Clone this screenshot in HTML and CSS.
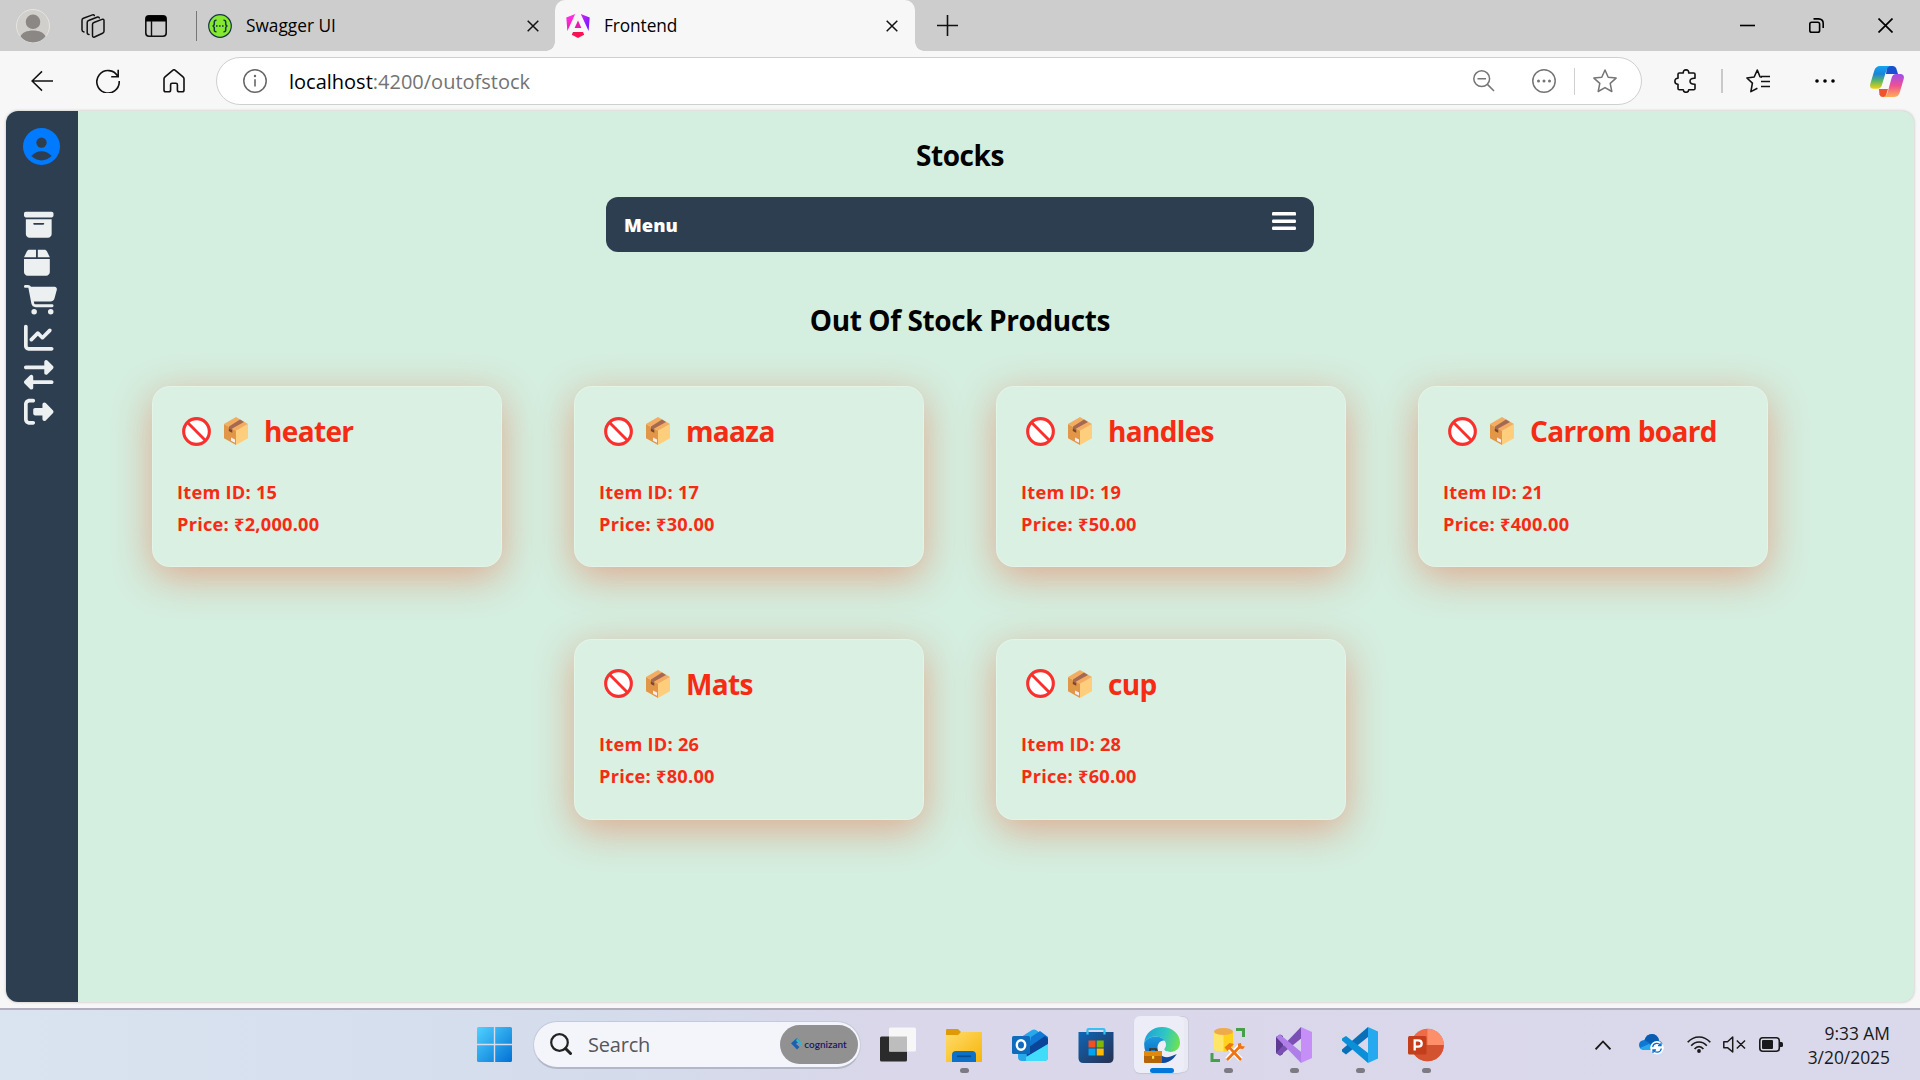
FILE: index.html
```html
<!DOCTYPE html>
<html lang="en">
<head>
<meta charset="utf-8">
<title>Frontend</title>
<link rel="stylesheet" href="styles.css">
</head>
<body>
<svg class="defs" width="0" height="0" aria-hidden="true">
  <defs>
    <linearGradient id="angL" x1="0" y1="0" x2="0" y2="1"><stop offset="0" stop-color="#ff32e8"/><stop offset="1" stop-color="#f01ab0"/></linearGradient>
    <linearGradient id="angR" x1="0" y1="0" x2="1" y2="1"><stop offset="0" stop-color="#c72bf0"/><stop offset="1" stop-color="#7010ff"/></linearGradient>
    <linearGradient id="winG" gradientUnits="userSpaceOnUse" x1="0" y1="0" x2="35" y2="35"><stop offset="0" stop-color="#4fd2ff"/><stop offset="1" stop-color="#0271d4"/></linearGradient>
    <linearGradient id="foldG" x1="0" y1="0" x2="1" y2="1"><stop offset="0" stop-color="#ffdc6b"/><stop offset="1" stop-color="#f7b409"/></linearGradient>
    <linearGradient id="storeG" x1="0" y1="0" x2="1" y2="1"><stop offset="0" stop-color="#0e66b8"/><stop offset="1" stop-color="#28304f"/></linearGradient>
    <linearGradient id="edgeT" x1="0" y1="0.3" x2="1" y2="0.5"><stop offset="0" stop-color="#1aa3d8"/><stop offset=".55" stop-color="#2fc6c4"/><stop offset="1" stop-color="#6ce254"/></linearGradient>
    <linearGradient id="edgeB" x1="0" y1="0" x2="0" y2="1"><stop offset="0" stop-color="#1c9be0"/><stop offset="1" stop-color="#0b5cb4"/></linearGradient>
    <linearGradient id="cpL" x1="0" y1="0" x2="0" y2="1"><stop offset="0" stop-color="#12a4ee"/><stop offset=".35" stop-color="#1b83dc"/><stop offset=".65" stop-color="#5db564"/><stop offset="1" stop-color="#f3d20c"/></linearGradient>
    <linearGradient id="cpR" x1="0" y1="0" x2="0" y2="1"><stop offset="0" stop-color="#a04dee"/><stop offset=".5" stop-color="#ee5093"/><stop offset="1" stop-color="#ffae55"/></linearGradient>
    <symbol id="banned" viewBox="0 0 28 28"><circle cx="14" cy="14" r="12.4" fill="#fff" stroke="#f8312f" stroke-width="3"/><path d="M5.6 5.6L22.4 22.4" stroke="#f8312f" stroke-width="2.8"/></symbol>
    <symbol id="parcel" viewBox="0 0 24 28"><path d="M0 7L12 13.4V28L0 21.2z" fill="#e19747"/><path d="M24 7L12 13.4V28l12-6.8z" fill="#ffce7c"/><path d="M12 0l12 7-12 6.8L0 7z" fill="#f3ad61"/><path d="M16 2.4L5 9.6v4.2l3.2 1.8v-4.2L20 5z" fill="#a56953"/><path d="M4.800 11.500v2.400l3.400 1.900v-2.600z" fill="#7d4533"/><path d="M7 20.500l4 2v3.200l-4-2z" fill="#f3eef8"/></symbol>
    <symbol id="close" viewBox="0 0 12 12"><path d="M.7.7l10.600 10.600M11.300.7L.7 11.300" fill="none" stroke="#111" stroke-width="1.500"/></symbol>
  </defs>
</svg>

<header class="tabstrip">
  <svg class="avatar" viewBox="0 0 34 34"><circle cx="17" cy="17" r="16.500" fill="#d1cfcb" stroke="#e6e4e0"/><circle cx="17" cy="12.800" r="7.300" fill="#8b8785"/><path d="M4.500 27.500C6 23.500 11 21.500 17 21.500s11 2 12.500 6A16.300 16.300 0 0 1 17 33.500 16.300 16.300 0 0 1 4.500 27.500z" fill="#8b8785"/></svg>
  <svg class="workspaces" viewBox="0 0 24 24" fill="none" stroke="#111" stroke-width="1.500" stroke-linejoin="round" stroke-linecap="round"><path d="M11.500 10.500q0-1.500 1.400-2L21 5.400q2-.6 2 1.400v10.400q0 1.400-1.400 2L13.500 23q-2 .6-2-1.400z"/><path d="M8 20.500q-1.800 0-1.800-2V8.500q0-1.500 1.400-2l9-3.500q1.400-.3 1.700.9"/><path d="M3 18q-2-.3-2-2V6.200q0-1.400 1.400-2L11.500.9q1.400-.4 1.800.7"/></svg>
  <svg class="tab-actions" viewBox="0 0 22 22"><rect x=".8" y=".8" width="20.400" height="20.400" rx="3.200" fill="none" stroke="#111" stroke-width="1.600"/><path d="M1 6.500V3.500Q1 .8 3.500.8h15Q21 .8 21 3.500v3z"/><path d="M6.500 6v15" stroke="#111" stroke-width="1.400"/></svg>
  <span class="strip-sep"></span>
  <div class="tab">
    <svg class="favicon" viewBox="0 0 24 24"><circle cx="12" cy="12" r="11.300" fill="#85ea2d" stroke="#173647" stroke-width="1.200"/><g fill="none" stroke="#173647" stroke-width="1.500"><path d="M8.500 6.200q-2.400-.2-2.200 2.300.3 3.500-1.800 3.500 2.100 0 1.800 3.500-.2 2.500 2.200 2.300M15.500 6.200q2.400-.2 2.200 2.300-.3 3.500 1.800 3.500-2.100 0-1.800 3.500.2 2.500-2.200 2.300"/><path d="M8 12h8" stroke-dasharray="1.600 1.400"/></g></svg>
    <span class="tab-title swagger-title">Swagger UI</span>
    <svg class="tab-close"><use href="#close"/></svg>
  </div>
  <div class="tab active">
    <svg class="favicon" viewBox="0 0 24 24"><path d="M9.200 0L.3 3.400 1.400 17z" fill="url(#angL)"/><path d="M14.800 0l8.900 3.400L22.600 17z" fill="url(#angR)"/><path d="M12 6.500L15.400 14H8.600z" fill="#e81ba8"/><path d="M7 18h10l1.200 2.800L12 24l-6.200-3.200z" fill="#fb1254"/></svg>
    <span class="tab-title">Frontend</span>
    <svg class="tab-close"><use href="#close"/></svg>
  </div>
  <svg class="new-tab" viewBox="0 0 21 21"><path d="M10.500 0v21M0 10.500h21" stroke="#111" stroke-width="1.600"/></svg>
  <div class="window-controls">
    <svg viewBox="0 0 15 15"><path d="M0 7.500h15" stroke="#000" stroke-width="1.600"/></svg>
    <svg viewBox="0 0 15 15" fill="none" stroke="#000" stroke-width="1.600"><rect x=".8" y="4.300" width="9.800" height="9.900" rx="1.800"/><path d="M4.500.9H9.500Q14.200 1 14.200 5.500V10"/></svg>
    <svg viewBox="0 0 15 15"><path d="M.5.5l14 14M14.500.5l-14 14" stroke="#000" stroke-width="1.700"/></svg>
  </div>
</header>

<nav class="toolbar">
  <svg class="back" viewBox="0 0 24 24" fill="none" stroke="#111" stroke-width="1.600"><path d="M24 12H1M12 1.500L1.200 12 12 22.500"/></svg>
  <svg class="reload" viewBox="0 0 24 24" fill="none" stroke="#111" stroke-width="1.600"><path d="M21.800 7.300A11.200 11.200 0 1 0 23.200 12M22.200.8v6.900h-7"/></svg>
  <svg class="home" viewBox="0 0 22 24" fill="none" stroke="#111" stroke-width="1.600" stroke-linejoin="round"><path d="M1 9.800Q1 8.700 2 7.800L9.700 1.300q1.300-1 2.600 0L20 7.800q1 .9 1 2V21q0 1.800-1.800 1.800h-3Q14.400 22.800 14.400 21v-5.300q0-1.500-1.500-1.500H9.100q-1.500 0-1.500 1.500V21q0 1.800-1.800 1.800h-3Q1 22.800 1 21z"/></svg>
  <div class="address">
    <svg class="info" viewBox="0 0 24 24"><circle cx="12" cy="12" r="11.200" fill="none" stroke="#666" stroke-width="1.500"/><path d="M12 10.200V17.500" stroke="#666" stroke-width="1.600"/><circle cx="12" cy="7" r="1.200" fill="#666"/></svg>
    <span class="url"><b>localhost</b>:4200/outofstock</span>
    <svg class="zoom-out" viewBox="0 0 22 22" fill="none" stroke="#757575" stroke-width="1.500"><circle cx="8.700" cy="8.700" r="7.900"/><path d="M4.500 8.700h8.500M14.400 14.400L21 21"/></svg>
    <svg class="more" viewBox="0 0 24 24"><circle cx="12" cy="12" r="11.200" fill="none" stroke="#757575" stroke-width="1.500"/><g fill="#757575"><circle cx="6.500" cy="12" r="1.500"/><circle cx="12" cy="12" r="1.500"/><circle cx="17.500" cy="12" r="1.500"/></g></svg>
    <span class="addr-sep"></span>
    <svg class="star" viewBox="0 0 24 24" fill="none" stroke="#757575" stroke-width="1.500" stroke-linejoin="round"><path d="M12 1l3.200 7.200 7.900.9-5.900 5.300 1.600 8.100-6.800-3.900-6.800 3.900 1.600-8.100L.9 9.100l7.900-.9z"/></svg>
  </div>
  <svg class="puzzle" viewBox="0 0 22 24" fill="none" stroke="#111" stroke-width="1.600" stroke-linejoin="round"><path d="M4 5.300Q4 4 5.300 4H9.300Q9 .9 12 .9T14.700 4h5Q21 4 21 5.300V9.300Q16 9 16 12.200T21 15.200V19.500Q21 20.800 19.700 20.800H14.700Q14.700 23.300 12 23.300T9.300 20.800H5.300Q4 20.800 4 19.500V15.200Q.9 15.200.9 12.200T4 9.300z"/></svg>
  <span class="tool-sep"></span>
  <svg class="favs" viewBox="0 0 24 24" fill="none" stroke="#111" stroke-width="1.600" stroke-linejoin="round"><path d="M16 8.200l-2-.4L11.300 1 8.200 8 .9 9l5.500 5.200-1.500 8.400 6.500-3.300M15 12.500h9M15 7.500h9M15 17.500h9"/></svg>
  <svg class="dots" viewBox="0 0 20 4"><circle cx="2" cy="2" r="1.800"/><circle cx="10" cy="2" r="1.800"/><circle cx="18" cy="2" r="1.800"/></svg>
  <svg class="copilot" viewBox="0 0 34 31"><path d="M17 0h6q2.500 0 3.300 2.500L28 8H16z" fill="#1a50cf"/><path d="M9 23h9l-2.500 8H13q-2.800 0-3.600-2.500z" fill="#f0542e"/><path d="M12 0h8q-2.500 1-3.500 4l-4.600 15q-1 3.800-4.500 3.800H3.500Q-.8 22.500.3 18L4.300 4.500Q5.800 0 10 0z" fill="url(#cpL)"/><path d="M23 8h7.500q4.300.5 3.200 5l-4 13.500Q28.200 31 24 31H13.500q3-1 4-4.200l4-14.500Q22.500 8 26 8z" fill="url(#cpR)"/></svg>
</nav>

<div class="viewport">
  <div class="page">
    <aside class="sidebar">
      <svg class="user" viewBox="2 2 20 20"><circle cx="12" cy="12" r="10" fill="#007bff"/><g fill="#2d3e50"><circle cx="12" cy="9.900" r="2.800"/><path d="M6.500 17.200C8 15.300 9.800 14.500 12 14.500s4 .8 5.500 2.700C16 18.700 14 19.500 12 19.500s-4-.8-5.500-2.300z"/></g></svg>
      <ul class="side-menu">
        <li><svg viewBox="0 0 512 512"><path d="M32 32H480c17.700 0 32 14.300 32 32V96c0 17.700-14.300 32-32 32H32C14.300 128 0 113.700 0 96V64C0 46.300 14.300 32 32 32zm0 128H480V416c0 35.300-28.700 64-64 64H96c-35.300 0-64-28.700-64-64V160zm128 80c0 8.800 7.200 16 16 16H336c8.800 0 16-7.200 16-16s-7.200-16-16-16H176c-8.800 0-16 7.200-16 16z"/></svg></li>
        <li><svg viewBox="0 0 512 512"><path d="M50.700 58.500L0 160H208V32H93.700C75.500 32 58.900 42.300 50.700 58.500zM240 160H448L397.300 58.500C389.100 42.300 372.500 32 354.300 32H240V160zm208 32H0V416c0 35.300 28.700 64 64 64H384c35.300 0 64-28.700 64-64V192z"/></svg></li>
        <li><svg class="wide" viewBox="0 0 576 512"><path d="M0 24C0 10.700 10.700 0 24 0H69.500c22 0 41.500 12.800 50.600 32h411c26.300 0 45.500 25 38.600 50.400l-41 152.300c-8.500 31.400-37 53.300-69.500 53.300H170.700l5.400 28.500c2.200 11.300 12.100 19.500 23.600 19.500H488c13.300 0 24 10.700 24 24s-10.700 24-24 24H199.700c-34.600 0-64.300-24.600-70.700-58.500L77.400 54.500c-.7-3.800-4-6.500-7.900-6.500H24C10.700 48 0 37.300 0 24zM128 464a48 48 0 1 1 96 0 48 48 0 1 1 -96 0zm336-48a48 48 0 1 1 0 96 48 48 0 1 1 0-96z"/></svg></li>
        <li><svg viewBox="0 0 512 512"><path d="M64 64c0-17.700-14.300-32-32-32S0 46.300 0 64V400c0 44.200 35.800 80 80 80H480c17.700 0 32-14.300 32-32s-14.300-32-32-32H80c-8.800 0-16-7.200-16-16V64zm406.600 86.600c12.500-12.500 12.500-32.800 0-45.300s-32.800-12.500-45.300 0L320 210.700l-57.400-57.400c-12.500-12.500-32.800-12.500-45.300 0l-112 112c-12.500 12.500-12.500 32.800 0 45.300s32.800 12.500 45.300 0L240 221.300l57.400 57.400c12.500 12.500 32.800 12.500 45.300 0l128-128z"/></svg></li>
        <li><svg viewBox="0 0 512 512"><path d="M32 96l320 0V32c0-12.900 7.800-24.600 19.800-29.600s25.700-2.200 34.900 6.900l96 96c6 6 9.400 14.100 9.400 22.600s-3.400 16.600-9.400 22.600l-96 96c-9.200 9.200-22.900 11.900-34.900 6.900s-19.800-16.600-19.800-29.600V160L32 160c-17.700 0-32-14.300-32-32s14.300-32 32-32zM480 352c17.700 0 32 14.300 32 32s-14.300 32-32 32H160v64c0 12.900-7.800 24.600-19.800 29.600s-25.700 2.200-34.900-6.900l-96-96c-6-6-9.400-14.100-9.400-22.600s3.400-16.600 9.400-22.600l96-96c9.200-9.200 22.900-11.900 34.900-6.900s19.800 16.600 19.800 29.600l0 64H480z"/></svg></li>
        <li><svg viewBox="0 0 512 512"><path d="M377.900 105.900L500.700 228.700c7.200 7.200 11.300 17.100 11.300 27.300s-4.100 20.100-11.300 27.300L377.900 406.100c-6.400 6.400-15 9.900-24 9.900c-18.700 0-33.900-15.200-33.900-33.900l0-62.100-128 0c-17.700 0-32-14.300-32-32l0-64c0-17.700 14.300-32 32-32l128 0 0-62.100c0-18.700 15.200-33.900 33.900-33.900c9 0 17.600 3.600 24 9.900zM160 96L96 96c-17.700 0-32 14.300-32 32l0 256c0 17.700 14.300 32 32 32l64 0c17.700 0 32 14.300 32 32s-14.300 32-32 32l-64 0c-53 0-96-43-96-96L0 128C0 75 43 32 96 32l64 0c17.700 0 32 14.300 32 32s-14.300 32-32 32z"/></svg></li>
      </ul>
    </aside>
    <main class="content">
      <h2 class="heading stocks">Stocks</h2>
      <div class="menu-bar">
        <span class="menu-label">Menu</span>
        <svg class="burger" viewBox="0 0 24 18"><g fill="#fff"><rect width="24" height="3.600" rx="1.200"/><rect y="7.500" width="24" height="3.400" rx="1.200"/><rect y="14.600" width="24" height="3.400" rx="1.200"/></g></svg>
      </div>
      <h2 class="heading products">Out Of Stock Products</h2>
      <section class="cards">
        <article class="card"><h3><svg class="i-ban"><use href="#banned"/></svg><svg class="i-box"><use href="#parcel"/></svg><span>heater</span></h3><p>Item ID: 15</p><p>Price: ₹2,000.00</p></article>
        <article class="card"><h3><svg class="i-ban"><use href="#banned"/></svg><svg class="i-box"><use href="#parcel"/></svg><span>maaza</span></h3><p>Item ID: 17</p><p>Price: ₹30.00</p></article>
        <article class="card"><h3><svg class="i-ban"><use href="#banned"/></svg><svg class="i-box"><use href="#parcel"/></svg><span>handles</span></h3><p>Item ID: 19</p><p>Price: ₹50.00</p></article>
        <article class="card"><h3><svg class="i-ban"><use href="#banned"/></svg><svg class="i-box"><use href="#parcel"/></svg><span>Carrom board</span></h3><p>Item ID: 21</p><p>Price: ₹400.00</p></article>
        <article class="card"><h3><svg class="i-ban"><use href="#banned"/></svg><svg class="i-box"><use href="#parcel"/></svg><span>Mats</span></h3><p>Item ID: 26</p><p>Price: ₹80.00</p></article>
        <article class="card"><h3><svg class="i-ban"><use href="#banned"/></svg><svg class="i-box"><use href="#parcel"/></svg><span>cup</span></h3><p>Item ID: 28</p><p>Price: ₹60.00</p></article>
      </section>
    </main>
  </div>
</div>

<footer class="taskbar">
  <svg class="start" viewBox="0 0 35 35"><path d="M1.500 0H16.800V16.800H0V1.500Q0 0 1.500 0zM18.200 0H33.500Q35 0 35 1.500V16.800H18.200zM0 18.200H16.800V35H1.500Q0 35 0 33.500zM18.200 18.200H35V33.500Q35 35 33.500 35H18.200z" fill="url(#winG)"/></svg>
  <div class="search">
    <svg class="magnifier" viewBox="0 0 22 22" fill="none" stroke="#222"><circle cx="9.500" cy="9.500" r="8.300" stroke-width="2.200"/><path d="M15.500 15.500L20.500 20.500" stroke-width="3" stroke-linecap="round"/></svg>
    <span class="search-text">Search</span>
    <span class="brand"><svg viewBox="0 0 12 12"><path d="M6 0L0 5.200 6 11.500 8.500 9 5 6 8.500 2.800z" fill="#1c5fb0"/><path d="M6 0l5.500 5.500L8.500 9V5.500L5 3z" fill="#35b5c8"/></svg>cognizant</span>
  </div>
  <div class="apps">
    <span class="app"><svg viewBox="0 0 36 36"><rect y="9.500" width="27" height="25" rx="1.500" fill="#2b2b2b"/><rect x="9" y=".5" width="27" height="24" rx="1.500" fill="#f7f7f7"/><rect x="9" y="9.500" width="18" height="15" fill="#bdbdbd"/></svg></span>
    <span class="app run"><svg viewBox="0 0 36 36"><path d="M1 2H12l3 3-3 4H0V3.200Q0 2 1 2z" fill="#dd9c07"/><path d="M0 8H12l3.500-3H35.500Q36 5 36 6.500V35H0z" fill="url(#foldG)"/><path d="M6 35V28q0-4 4-4H26q4 0 4 4v7z" fill="#0b70c6"/><rect x="11" y="28.500" width="14" height="1.600" fill="#044d8f"/></svg></span>
    <span class="app"><svg viewBox="0 0 36 36"><path d="M6 12L20 3q2-1 4 0l12 9v18q0 4-4 4H10q-4 0-4-4z" fill="#28a8ea"/><path d="M19 10l9-6 8 6v7L15 30z" fill="#0f78d4"/><path d="M14 22L33 9l3 3v5L15 30z" fill="#0a4599"/><path d="M14 30l22-13V30q0 4-4 4H14z" fill="#41dcfa"/><rect y="9" width="18" height="18" rx="1.500" fill="#0f6cbd"/><ellipse cx="9" cy="18" rx="4.200" ry="4.800" fill="none" stroke="#fff" stroke-width="2.400"/></svg></span>
    <span class="app"><svg viewBox="0 0 36 36"><path d="M.5 5H35.500V31q0 5-5 5H5.500Q.5 36 .5 31z" fill="url(#storeG)"/><path d="M9.500 7.500V3Q9.500 2 10.500 2h15q1 0 1 1v4.500" fill="none" stroke="#35c1f1" stroke-width="2.200"/><path d="M10.500 13.500h7v7h-7z" fill="#f25022"/><path d="M18.700 13.500h7v7h-7z" fill="#7fba00"/><path d="M10.500 21.500h7v7h-7z" fill="#00a4ef"/><path d="M18.700 21.500h7v7h-7z" fill="#ffb900"/></svg></span>
    <span class="app current"><svg viewBox="0 0 36 36"><path d="M.2 16C1 6 9 0 18 0c10.500 0 18 7.200 18 15.500 0 6-4.600 9.500-9.500 9.500-4.500 0-6.200-1.800-6.200-2.700 0-.8 1.700-1.500 1.700-4.500 0-4-4-8.300-10.300-8.300C6.500 9.500 2 12 .2 16z" fill="url(#edgeT)"/><path d="M.2 16C2 12 6.500 9.500 11.700 9.500c4.300 0 7.300 1.800 9 4-4-.5-7.200 2.500-7.200 7.500 0 8 7 13.500 14 11-3 2.700-6.500 4-9.500 4C8 36-.5 28 .2 16z" fill="url(#edgeB)"/><path d="M13.500 21c0 7 7 11 13 8.500 3-1 5-2 6.300-2.500C29 33 24 36 18 36c-3.500-2-6.500-7-4.500-15z" fill="#114a9c"/><rect x="0" y="24" width="18" height="12" rx="1" fill="#b4650b"/><rect x="0" y="24" width="18" height="5" rx="1" fill="#e08a0c"/><path d="M6 24v-2h6v2" fill="none" stroke="#4b2b08" stroke-width="1.600"/><rect x="8" y="29" width="2.200" height="2.800" fill="#ffd83c"/></svg></span>
    <span class="app run"><svg viewBox="0 0 36 36"><path d="M4 4.500V22q0 2.800 9.500 2.800T23 22V4.500z" fill="#ffd21d"/><path d="M4 4.500V22q0 2.800 9.500 2.800V4.500z" fill="#ffe56a"/><ellipse cx="13.500" cy="4.500" rx="9.500" ry="3.600" fill="#efaa4c"/><path d="M26 2.500h7.500V10M2 26v7.500h8" fill="none" stroke="#45a049" stroke-width="3"/><path d="M17 32.500L31 18M17.500 19.500L31 32.500" stroke="#fff" stroke-width="5"/><path d="M17 33L30 19.500M19 20L31 33" stroke="#ee7414" stroke-width="2.600"/><path d="M14.500 20.500l5-4.500 4.500 1-6.500 7zM28 16.500l0 5 5 .5 2-2.500-3.500-.5-.5-3z" fill="#ee7414"/></svg></span>
    <span class="app run"><svg viewBox="0 0 36 36"><path d="M0 10l4-2.500L7 9v18l-3 1.800L0 26z" fill="#5c3b91"/><path d="M4 28.600L0 26 25 0l2 10z" fill="#7a50b5"/><path d="M4 7.500L0 10 25 36l2-9.500z" fill="#b07ee8"/><path d="M25 0l11 5V31l-11 5z" fill="#c58ff7"/></svg></span>
    <span class="app run"><svg viewBox="0 0 36 36"><path d="M26 0v10L4 27.500 0 24.500v-2z" fill="#0a6fb8"/><path d="M26 36V26L4 9 0 11.500v2z" fill="#0b8fd8"/><path d="M26 0l10 4.500V31.500L26 36z" fill="#27a9f0"/></svg></span>
    <span class="app run"><svg viewBox="0 0 36 36"><circle cx="19.500" cy="18" r="16.300" fill="#ed6c47"/><path d="M19.500 1.700A16.300 16.300 0 0 1 35.800 18H19.500z" fill="#ff8f6b"/><path d="M35.800 18A16.300 16.300 0 0 1 3.200 18z" fill="#d35230"/><rect y="9" width="18.500" height="18.500" rx="1.500" fill="#c43e1c"/><path d="M6.700 23.500V13.300h3.500q3.500 0 3.500 3.200t-3.500 3.200H6.700" fill="none" stroke="#fff" stroke-width="2.300"/></svg></span>
  </div>
  <div class="tray">
    <svg class="chevron" viewBox="0 0 16 10" fill="none" stroke="#1a1a1a" stroke-width="1.800"><path d="M.6 9.300L8 1.500l7.400 7.800"/></svg>
    <svg class="cloud" viewBox="0 0 25 21"><path d="M5.500 16Q0 15.500 0 11T5.500 6Q7.500 0 13 0t7 6.500Q24 8 24 12t-5 4z" fill="#0f78d4"/><path d="M5.500 6Q7.500 0 13 0t7 6.500L12 10z" fill="#0a5cb0"/><path d="M1 14l9-4 7 6H5.500Q2 16 1 14z" fill="#28a8ea"/><circle cx="18" cy="13.800" r="6.800" fill="#fff"/><path d="M13.700 13a4.300 4.300 0 0 1 8-1.500M22.300 14.500a4.300 4.300 0 0 1-8 1.500M22 8.700v3h-3M14 19v-3h3" fill="none" stroke="#0a6cc8" stroke-width="1.300"/></svg>
    <svg class="wifi" viewBox="0 0 24 17" fill="none" stroke="#1a1a1a" stroke-width="1.700"><path d="M.7 6.300Q5.500 1 12 1t11.300 5.300M4.200 9.700Q7.500 6 12 6t7.800 3.700M7.600 13Q9.500 10.700 12 10.700T16.400 13"/><circle cx="12" cy="15" r="1.900" fill="#1a1a1a" stroke="none"/></svg>
    <svg class="speaker" viewBox="0 0 23 17" fill="none" stroke="#1a1a1a" stroke-width="1.500" stroke-linejoin="round"><path d="M.8 5.700H4.500L9.700 1v15L4.500 11.700H.8zM13.800 4.500l8.200 8M22 4.500l-8.200 8"/></svg>
    <svg class="battery" viewBox="0 0 24 15"><rect x=".8" y=".8" width="19.500" height="13.400" rx="3" fill="none" stroke="#1a1a1a" stroke-width="1.600"/><rect x="3" y="3" width="11" height="9" rx="1" fill="#1a1a1a"/><path d="M21 5h1.500Q24 5 24 6.500v2Q24 10 22.500 10H21z" fill="#1a1a1a"/></svg>
    <div class="clock"><span>9:33 AM</span><span>3/20/2025</span></div>
  </div>
</footer>
</body>
</html>
```
FILE: styles.css
```css
* { box-sizing: border-box; }

body {
  margin: 0;
  width: 1920px;
  height: 1080px;
  overflow: hidden;
  display: flex;
  flex-direction: column;
  background: #f7f7f7;
  font-family: "Open Sans", "Noto Sans", sans-serif;
  color: #000;
}

svg { display: block; flex: none; }
.defs { position: absolute; }

/* Tab strip */
.tabstrip {
  flex: none;
  height: 51px;
  padding-left: 16px;
  display: flex;
  align-items: center;
  background: #cdcdcd;
}
.avatar { width: 34px; height: 34px; }
.workspaces { width: 24px; height: 24px; margin-left: 31px; }
.tab-actions { width: 22px; height: 22px; margin-left: 40px; }
.strip-sep { width: 1px; height: 30px; margin-left: 29px; background: #777; }

.tab {
  width: 358px;
  height: 51px;
  padding: 0 16px 0 11px;
  display: flex;
  align-items: center;
}
.tab.active {
  position: relative;
  width: 360px;
  padding-right: 17px;
  background: #f7f7f7;
  border-radius: 10px 10px 0 0;
}
.tab.active::before,
.tab.active::after {
  content: "";
  position: absolute;
  bottom: 0;
  width: 9px;
  height: 9px;
}
.tab.active::before { left: -9px; background: radial-gradient(circle at 0 0, transparent 8.5px, #f7f7f7 9px); }
.tab.active::after { right: -9px; background: radial-gradient(circle at 100% 0, transparent 8.5px, #f7f7f7 9px); }
.favicon { width: 24px; height: 24px; }
.tab-title { margin-left: 14px; flex: 1; font-size: 17.3px; letter-spacing: -.1px; white-space: nowrap; }
.swagger-title { letter-spacing: 0; }
.tab-close { width: 12px; height: 12px; }
.new-tab { width: 21px; height: 21px; margin-left: 22px; }
.window-controls { margin-left: auto; margin-right: 27px; display: flex; gap: 54px; }
.window-controls svg { width: 15px; height: 15px; }

/* Toolbar */
.toolbar {
  flex: none;
  height: 60px;
  padding: 0 16px 0 30px;
  display: flex;
  align-items: center;
}
.back { width: 24px; height: 22px; }
.reload { width: 24px; height: 24px; margin-left: 42px; }
.home { width: 22px; height: 24px; margin-left: 43px; }
.address {
  width: 1426px;
  height: 48px;
  margin-left: 31px;
  padding: 0 24px 0 26px;
  display: flex;
  align-items: center;
  background: #fff;
  border: 1px solid #cfcfcf;
  border-radius: 24px;
}
.info { width: 24px; height: 24px; }
.url { margin-left: 22px; flex: 1; font-size: 20px; color: #737373; white-space: nowrap; }
.url b { font-weight: 400; color: #000; }
.zoom-out { width: 22px; height: 22px; }
.more { width: 24px; height: 24px; margin-left: 37px; }
.addr-sep { width: 1px; height: 27px; margin-left: 18px; background: #d0d0d0; }
.star { width: 24px; height: 24px; margin-left: 18px; }
.puzzle { width: 22px; height: 24px; margin-left: 32px; }
.tool-sep { width: 2px; height: 24px; margin-left: 25px; background: #c9c9c9; }
.favs { width: 24px; height: 24px; margin-left: 23px; }
.dots { width: 20px; height: 4px; margin-left: 45px; }
.copilot { width: 34px; height: 31px; margin-left: auto; }

/* Page */
.viewport { flex: none; height: 897px; padding: 0 6px; }
.page {
  height: 891px;
  display: flex;
  overflow: hidden;
  background: #d4eedf;
  border-radius: 12px;
  box-shadow: 0 0 3px rgba(0, 0, 0, .25);
}
.sidebar { flex: none; width: 72px; padding: 17px 0 0 17px; background: #2d3e50; }
.user { width: 37px; height: 37px; }
.side-menu {
  list-style: none;
  margin: 41.5px 0 0;
  padding: 0 0 0 1px;
}
.side-menu li { height: 37.4px; display: flex; align-items: center; }
.side-menu svg { width: 29.5px; height: 29.5px; fill: #ecf0f1; }
.side-menu svg.wide { width: 33.2px; }

.content {
  flex: 1;
  padding-right: 72px;
  display: flex;
  flex-direction: column;
  align-items: center;
}
.heading { margin: 0; font-size: 28px; font-weight: 700; letter-spacing: -.4px; line-height: 40px; white-space: nowrap; }
.stocks { margin-top: 24px; }
.products { margin-top: 48px; }
.menu-bar {
  width: 708px;
  height: 55px;
  margin-top: 22px;
  padding: 0 18px;
  display: flex;
  justify-content: space-between;
  align-items: flex-start;
  background: #2d3e50;
  border-radius: 12px;
  color: #fff;
}
.menu-label { margin-top: 14px; font-size: 18.4px; font-weight: 800; line-height: 28px; }
.burger { width: 24px; height: 18px; margin-top: 15px; }

.cards {
  width: 1700px;
  margin-top: 46px;
  display: flex;
  flex-wrap: wrap;
  justify-content: center;
  gap: 71.5px 72px;
}
.card {
  width: 350px;
  height: 181px;
  padding: 24px 24px 0;
  background: #daf0e2;
  border: 1px solid rgba(255, 255, 255, .25);
  border-radius: 18px;
  box-shadow: 0 10px 38px rgba(238, 50, 0, .36);
  color: #f52b14;
}
.card h3 {
  margin: 0 0 24.8px;
  padding-left: 5px;
  height: 40px;
  display: flex;
  align-items: center;
  font-size: 28px;
  font-weight: 700;
  letter-spacing: -.65px;
  white-space: nowrap;
}
.i-ban { width: 29px; height: 29px; }
.i-box { width: 24px; height: 28px; margin-left: 13px; }
.card h3 span { margin-left: 16px; }
.card p { margin: 0; font-size: 18.2px; font-weight: 700; letter-spacing: .25px; line-height: 32px; }

/* Taskbar */
.taskbar {
  flex: none;
  height: 72px;
  padding: 0 30px 1px 477px;
  display: flex;
  align-items: center;
  border-top: 2px solid #b0afbd;
  background: linear-gradient(90deg, #d9e4f0 0, #d4dcec 32%, #d9d7e9 46%, #dad9eb 100%);
}
.start { width: 35px; height: 35px; }
.search {
  width: 328px;
  height: 48px;
  margin-left: 21px;
  padding: 0 2px 0 16px;
  display: flex;
  align-items: center;
  background: #f4f5fa;
  border: 1px solid #c5cadb;
  border-bottom: 2px solid #b3b7c8;
  border-radius: 24px;
}
.magnifier { width: 22px; height: 22px; }
.search-text { margin-left: 16px; flex: 1; font-size: 20px; letter-spacing: -.2px; color: #55575c; }
.brand {
  width: 78px;
  height: 39px;
  display: flex;
  align-items: center;
  justify-content: center;
  gap: 1px;
  background: #919191;
  border-radius: 20px;
  font: 600 10px "Lato", sans-serif;
  color: #1b1464;
}
.brand svg { width: 12px; height: 12px; }
.apps { margin-left: 4px; display: flex; }
.app {
  position: relative;
  width: 66px;
  height: 69px;
  display: flex;
  align-items: center;
  justify-content: center;
}
.app svg { width: 36px; height: 36px; position: relative; }
.app.run::after {
  content: "";
  position: absolute;
  left: 29px;
  bottom: 6px;
  width: 9px;
  height: 5px;
  border-radius: 3px;
  background: #7c7b84;
}
.app.current::before {
  content: "";
  position: absolute;
  left: 5px;
  top: 6px;
  width: 50px;
  height: 57px;
  border-radius: 6px;
  background: #ecedf6;
  box-shadow: 5px 0 0 -1px #e9e9f4, 5px 0 0 0 #cdccdc, 0 1px 1px #c4c4d2;
}
.app.current::after {
  content: "";
  position: absolute;
  left: 21px;
  bottom: 6px;
  width: 24px;
  height: 5px;
  border-radius: 3px;
  background: #0278d7;
}
.tray { margin-left: auto; display: flex; align-items: center; }
.chevron { width: 16px; height: 10px; }
.cloud { width: 25px; height: 21px; margin-left: 28px; }
.wifi { width: 24px; height: 17px; margin-left: 23px; }
.speaker { width: 23px; height: 17px; margin-left: 12px; }
.battery { width: 24px; height: 15px; margin-left: 13px; }
.clock {
  width: 107px;
  display: flex;
  flex-direction: column;
  align-items: flex-end;
  font-size: 17.4px;
  line-height: 24px;
  color: #1a1a1a;
  white-space: nowrap;
}
```
